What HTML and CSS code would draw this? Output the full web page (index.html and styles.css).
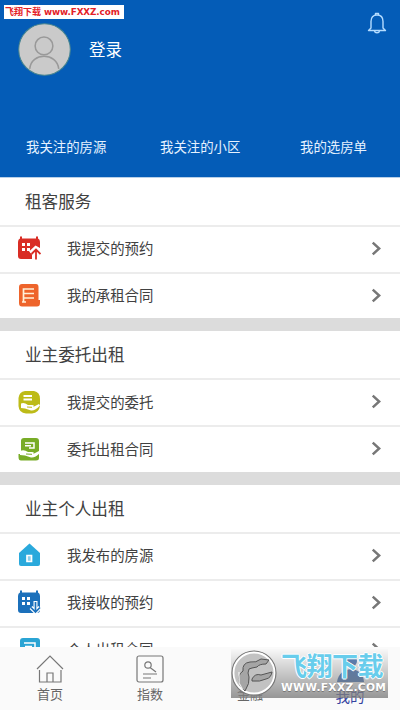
FILE: index.html
```html
<!DOCTYPE html>
<html lang="zh-CN">
<head>
<meta charset="utf-8">
<title>我的</title>
<link rel="stylesheet" href="styles.css">
</head>
<body>
<div class="app">
  <header class="header">
    <div class="profile">
      <svg class="avatar" viewBox="0 0 52 52"><circle cx="26" cy="26" r="25.3" fill="#cacaca" stroke="#47858f" stroke-width="1"/><g fill="none" stroke="#999" stroke-width="1.5"><circle cx="25.500" cy="22.500" r="8.700"/><path d="M11.500 45C13 28.500 38 28.500 40 45"/></g></svg>
      <span class="login">登录</span>
      <svg class="bell" viewBox="0 0 20 22"><g fill="none" stroke="#b5dcff" stroke-width="1.400" stroke-linejoin="round"><path d="M4 16V9.500C4 5.500 6 3 10 3S16 5.500 16 9.500V16L18.500 18.500H1.500Z"/><path d="M8.500 3V1.500H11.500V3M7.500 19C8 21.300 12 21.300 12.500 19"/></g></svg>
    </div>
    <nav class="shortcuts"><span>我关注的房源</span><span>我关注的小区</span><span>我的选房单</span></nav>
    <div class="stamp"><b class="stamp-name">飞翔下载</b><b class="stamp-url">www.FXXZ.com</b></div>
  </header>
  <main class="content">
    <section class="group">
      <h2>租客服务</h2>
      <div class="row">
        <svg class="icon" viewBox="0 0 24 24"><path fill="#d92d25" d="M3 .5H5V2.500H19V.5H21V2.500Q23 3 23 6V12L18.500 9.500L12 15.500L15 18V23H4Q1 23 1 20V6Q1 3 3 2.500Z"/><path fill="#fff" d="M5 7h3v3H5zM10 7h3v3h-3zM5 12h3v3H5zM10 12h3v3h-3z"/><path d="M19 23.500V14M14.500 18L19 13.500L23.500 18" fill="none" stroke="#fff" stroke-width="4"/><path d="M19 23.500V14M14.500 18L19 13.500L23.500 18" fill="none" stroke="#d92d25" stroke-width="1.800"/></svg>
        <span>我提交的预约</span><svg class="chevron" viewBox="0 0 10 14"><path d="M1.500 1.500L7.500 7L1.500 12.500"/></svg>
      </div>
      <div class="row">
        <svg class="icon" viewBox="0 0 24 24"><path fill="#ee642b" d="M5 1H19Q21.500 1 21.500 4V17H23V20Q23 23.500 20 23.500H5Q2 23.500 2 20V4Q2 1 5 1Z"/><path d="M6.500 19V6H17M7 10.500H17M7 15H17M5 19H9" fill="none" stroke="#fff0d8" stroke-width="1.700"/></svg>
        <span>我的承租合同</span><svg class="chevron" viewBox="0 0 10 14"><path d="M1.500 1.500L7.500 7L1.500 12.500"/></svg>
      </div>
    </section>
    <section class="group">
      <h2>业主委托出租</h2>
      <div class="row">
        <svg class="icon" viewBox="0 0 24 24"><path fill="#bdbb18" d="M8 1H17Q23 2 23 9V16Q22 23 15 23.500H9Q2 23 1.500 16V8Q2 2 8 1Z"/><path d="M6.500 6H15M6.500 9.500H15" stroke="#fff" stroke-width="1.800"/><path fill="#fff" d="M4 13.500Q7 12 11 15H15Q18 15 16 17L22 14L23 15.500Q18 21 14 20.500L8 18.500L4 18Z"/><path d="M10 17L15 17.300" stroke="#bdbb18"/></svg>
        <span>我提交的委托</span><svg class="chevron" viewBox="0 0 10 14"><path d="M1.500 1.500L7.500 7L1.500 12.500"/></svg>
      </div>
      <div class="row">
        <svg class="icon" viewBox="0 0 24 24"><path fill="#78ac27" d="M7 1H19Q22 1 22 4V21Q22 23.500 19 23.500H4Q1.500 23.500 1.500 20V17H4V4Q4 1 7 1Z"/><path d="M8 6H17V11H12M8 8.700H14" fill="none" stroke="#fff" stroke-width="1.500"/><path fill="#fff" d="M3 14Q7 12 11 15H15Q18 15 16 17L22 14L23 16Q18 21 14 20.500L8 18.500L3 18Z"/><path d="M9 17L15 17.300" stroke="#78ac27"/></svg>
        <span>委托出租合同</span><svg class="chevron" viewBox="0 0 10 14"><path d="M1.500 1.500L7.500 7L1.500 12.500"/></svg>
      </div>
    </section>
    <section class="group">
      <h2>业主个人出租</h2>
      <div class="row">
        <svg class="icon" viewBox="0 0 24 24"><path fill="#2aa9dc" d="M12.500 .5L23 10V21Q23 23 21 23H4Q2 23 2 21V10Z"/><path d="M10 12.500H14.500V18.500H10Z" fill="#8fd0eb" stroke="#fff" stroke-width="1.700"/></svg>
        <span>我发布的房源</span><svg class="chevron" viewBox="0 0 10 14"><path d="M1.500 1.500L7.500 7L1.500 12.500"/></svg>
      </div>
      <div class="row">
        <svg class="icon" viewBox="0 0 24 24"><path fill="#1b70bb" d="M3 .5H5V2.500H19V.5H21V2.500Q23 3 23 6V20Q23 23 20 23H4Q1 23 1 20V6Q1 3 3 2.500Z"/><path fill="#fff" d="M5 7h3v3H5zM10 7h3v3h-3zM5 12h3v3H5zM10 12h3v3h-3z"/><path d="M18.500 11V22M14 17.500L18.500 22L23 17.500" fill="none" stroke="#fff" stroke-width="4"/><path d="M18.500 12V22M14 17.500L18.500 22L23 17.500" fill="none" stroke="#1b70bb" stroke-width="1.700"/></svg>
        <span>我接收的预约</span><svg class="chevron" viewBox="0 0 10 14"><path d="M1.500 1.500L7.500 7L1.500 12.500"/></svg>
      </div>
      <div class="row">
        <svg class="icon" viewBox="0 0 24 24"><rect x="3" y="1" width="20" height="22" rx="3" fill="#2aa4d4"/><path d="M7 6H18V12H12M8 9.500H15" fill="none" stroke="#fff" stroke-width="1.500"/></svg>
        <span>个人出租合同</span><svg class="chevron" viewBox="0 0 10 14"><path d="M1.500 1.500L7.500 7L1.500 12.500"/></svg>
      </div>
    </section>
  </main>
  <footer class="tabs">
    <div class="tab"><svg class="tab-icon" viewBox="0 0 28 28"><path d="M1 14L14 1L27 14M3.500 15V27H25V15M11 27V18H17V27"/></svg><span>首页</span></div>
    <div class="tab"><svg class="tab-icon" viewBox="0 0 28 28"><rect x="1" y="1" width="26" height="26" rx="2"/><circle cx="12" cy="10" r="3.200"/><path d="M14 12.500L20 17M7 19H21M7 23H15"/></svg><span>指数</span></div>
    <div class="tab finance"><svg class="tab-icon" viewBox="0 0 28 28"></svg><span>金融</span></div>
    <div class="tab active"><svg class="tab-icon" viewBox="0 0 28 28"><circle cx="15" cy="6" r="6"/><path d="M1 27C3 10 27 10 28 27Z"/></svg><span>我的</span></div>
    <div class="watermark">
      <svg class="mark" viewBox="0 0 46 46"><circle cx="23" cy="23" r="21.800" fill="#c2c2c2" stroke="#777" stroke-width="1.500"/><circle cx="23" cy="23" r="20.500" fill="none" stroke="#fff" stroke-width="1.800"/><g stroke="#555" stroke-width="1" fill="#a5a5a5" stroke-linejoin="round"><path d="M11 38Q6 33 8 26Q9 23 12 21Q11 13 19 12Q25 13 30 9L38 10L35 14Q28 14 26 17Q20 18 18 19Q16 23 18 27Q19 33 14 41Z"/><path d="M21 29Q24 23 30 25L41 22Q40 28 35 29Q29 32 21 31Z"/></g><path d="M8 22V33L12 40" fill="none" stroke="#eee" stroke-width="1.300"/></svg>
      <div class="mark-text"><b class="mark-name">飞翔下载</b><b class="mark-url">WWW.FXXZ.COM</b></div>
    </div>
  </footer>
</div>
</body>
</html>
```

FILE: styles.css
```css
* { box-sizing: border-box; }
body { margin: 0; background: #fff; font-family: "Noto Sans CJK SC", "Noto Sans", sans-serif; color: #414141; }
.app { width: 400px; height: 710px; display: flex; flex-direction: column; overflow: hidden; }
.header { position: relative; flex: 0 0 178px; background: #045cb7; color: #e6f2ff; border-bottom: 1px solid #b8d0e8; }
.profile { display: flex; height: 78px; padding: 23px 13px 0 18px; }
.avatar { width: 53px; height: 53px; }
.login { margin-left: 18px; font-size: 16.5px; line-height: 53px; color: #fff; }
.bell { width: 20px; height: 22px; margin: -11px 0 0 auto; }
.shortcuts { display: grid; grid-template-columns: 134px 140px auto; padding: 56px 0 0 26px; font-size: 13.4px; line-height: 24px; }
.stamp { position: absolute; left: 4px; top: 5px; width: 120px; height: 14px; display: flex; align-items: center; gap: 3px; padding-left: 1px; background: #fff; color: #e32027; white-space: nowrap; line-height: 14px; }
.stamp-name { font-size: 9px; }
.stamp-url { font-family: "DejaVu Sans", sans-serif; font-size: 8.8px; letter-spacing: -.1px; }
.content { flex: 1; min-height: 0; overflow: hidden; }
.group { height: 153.400px; border-bottom: 13px solid #dcdcdc; }
.group:last-child { height: auto; border: 0; }
h2 { margin: 0; height: 47px; padding-left: 25px; font-size: 16.600px; line-height: 47px; font-weight: 400; }
.row { display: flex; align-items: center; height: 46.900px; padding: 0 18px 0 17px; border-top: 2px solid #ececec; font-size: 14.400px; }
.row span { margin-left: 26px; line-height: 42px; padding-bottom: 2px; }
.icon { width: 24px; height: 24px; margin-bottom: 2px; }
.chevron { width: 11px; height: 15px; margin-left: auto; margin-bottom: 2px; fill: none; stroke: #777; stroke-width: 2.300; }
.tabs { position: relative; display: flex; flex: 0 0 63px; background: #fafafa; }
.tab { flex: 1; display: flex; flex-direction: column; align-items: center; padding-top: 8px; color: #666; font-size: 13px; line-height: 20px; }
.tab-icon { width: 28px; height: 28px; margin-bottom: 1px; fill: none; stroke: #777; stroke-width: 1.200; }
.active { color: #3443a0; font-size: 14.500px; line-height: 23px; }
.active .tab-icon { fill: #2d5fa8; stroke: none; }
.watermark { position: absolute; left: 231px; top: 2px; width: 157px; height: 49px; display: flex; background: linear-gradient(rgba(240,240,240,.2), rgba(125,125,125,.8)); }
.mark { width: 46px; height: 46px; margin-top: 1px; flex: none; }
.mark-text { display: flex; flex-direction: column; white-space: nowrap; padding-left: 4px; }
.mark-name { font-size: 26px; line-height: 32px; letter-spacing: -.5px; color: #68cdec; text-shadow: 1px 0 #fff, -1px 0 #fff, 0 1px #fff, 0 -1px #fff; }
.mark-url { font-family: "DejaVu Sans", sans-serif; font-size: 10.700px; line-height: 13px; letter-spacing: .3px; color: #fff; text-shadow: 0 1px #777; }
```
